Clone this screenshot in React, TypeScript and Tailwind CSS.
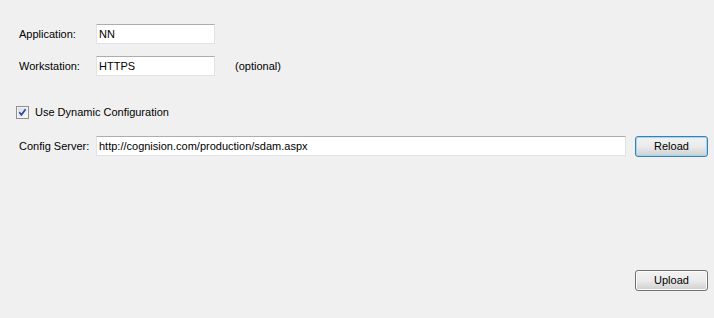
import React from 'react';

const font = { fontFamily: '"Liberation Sans", Arial, sans-serif' };

const TextBox: React.FC<{ value: string; className?: string }> = ({ value, className = '' }) => (
  <div
    className={`h-[20px] bg-white border border-[#e2e3ea] border-t-[#abadb3] flex items-center pl-[2px] text-[11px] text-black leading-none whitespace-nowrap ${className}`}
  >
    {value}
  </div>
);

const WinButton: React.FC<{ label: string; focused?: boolean }> = ({ label, focused }) => (
  <button
    className={`w-[73px] h-[21px] rounded-[3px] border text-[11px] text-black leading-none flex items-center justify-center bg-gradient-to-b from-[#f2f2f2] via-[#ebebeb] to-[#cfcfcf] ${
      focused
        ? 'border-[#3c7fb1] shadow-[inset_0_0_0_1px_#97d9f7]'
        : 'border-[#707070] shadow-[inset_0_0_0_1px_#fcfcfc]'
    }`}
  >
    {label}
  </button>
);

const CheckBox: React.FC = () => (
  <svg width="13" height="13" viewBox="0 0 13 13" className="shrink-0">
    <defs>
      <linearGradient id="cbg" x1="0" y1="0" x2="1" y2="1">
        <stop offset="0" stopColor="#d8dbe0" />
        <stop offset="1" stopColor="#f8f8f8" />
      </linearGradient>
    </defs>
    <rect x="0.5" y="0.5" width="12" height="12" fill="#f4f4f4" stroke="#8e8f8f" />
    <rect x="2" y="2" width="9" height="9" fill="url(#cbg)" />
    <path d="M3.3 6.2 L5.4 8.8 L9.6 3.2" fill="none" stroke="#2a4a9e" strokeWidth="1.7" />
  </svg>
);

export default function App() {
  return (
    <div style={font} className="w-[714px] h-[318px] bg-[#f0f0f0] text-[11px] text-black flex flex-col overflow-hidden">
      <div className="flex items-center h-[20px] mt-[24px]">
        <span className="w-[96px] pl-[19px] shrink-0">Application:</span>
        <TextBox value="NN" className="w-[119px]" />
      </div>
      <div className="flex items-center h-[20px] mt-[12px]">
        <span className="w-[96px] pl-[19px] shrink-0">Workstation:</span>
        <TextBox value="HTTPS" className="w-[119px]" />
        <span className="ml-[20px]">(optional)</span>
      </div>
      <div className="flex items-center h-[13px] mt-[30px] pl-[16px] gap-[6px]">
        <CheckBox />
        <span>Use Dynamic Configuration</span>
      </div>
      <div className="flex items-start h-[21px] mt-[17px]">
        <span className="w-[96px] pl-[19px] shrink-0 whitespace-nowrap h-[20px] flex items-center">Config Server:</span>
        <TextBox value="http://cognision.com/production/sdam.aspx" className="w-[530px]" />
        <div className="ml-[9px]">
          <WinButton label="Reload" focused />
        </div>
      </div>
      <div className="flex justify-end mt-[113px] pr-[6px]">
        <WinButton label="Upload" />
      </div>
    </div>
  );
}
